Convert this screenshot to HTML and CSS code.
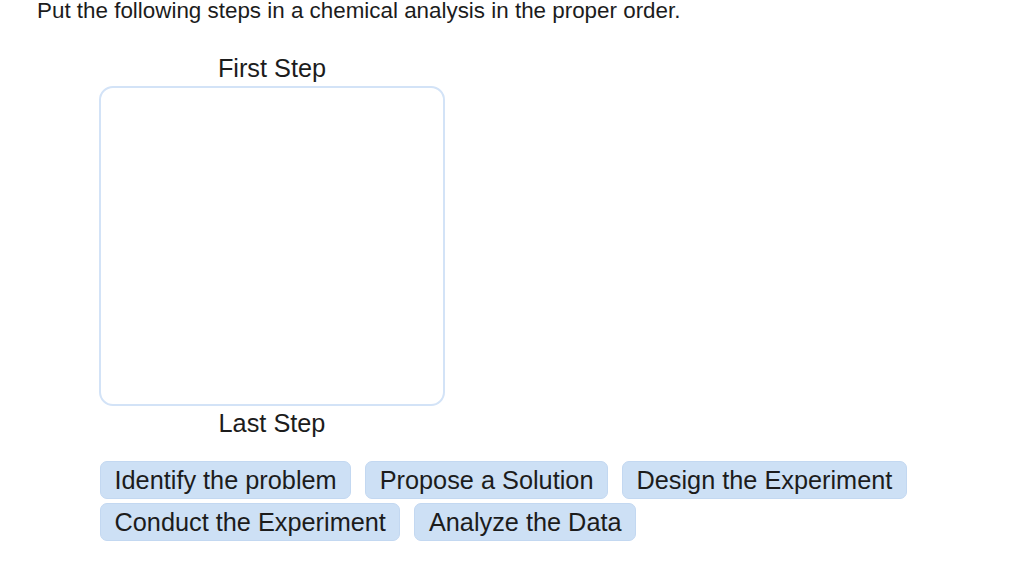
FILE: index.html
```html
<!doctype html>
<html lang="en">
<head>
    <meta charset="utf-8">
    <meta name="viewport" content="width=device-width, initial-scale=1">
    <title>Ordering</title>

    <link rel="stylesheet" href="styles.css">
</head>
<body>
<div class="question">
    <p class="prompt">Put the following steps in a chemical analysis in the proper order.</p>

    <div class="sort">
        <div class="sort-label">First Step</div>
        <div class="drop" id="drop"></div>
        <div class="sort-label">Last Step</div>
    </div>

    <div class="chips" id="chips">
        <span class="chip" draggable="true">Identify the problem</span>
        <span class="chip" draggable="true">Propose a Solution</span>
        <span class="chip" draggable="true">Design the Experiment</span>
        <span class="chip" draggable="true">Conduct the Experiment</span>
        <span class="chip" draggable="true">Analyze the Data</span>
    </div>
</div>
</body>
</html>
```

FILE: styles.css
```css
body {
    margin: 0;
    font-family: "Liberation Sans", Arial, Helvetica, sans-serif;
    color: #1c1c1c;
    background: #fff;
}

.question {
    padding: 0 0 0 37px;
}

.prompt {
    margin: 0;
    font-size: 22.4px;
    line-height: 22px;
}

.sort {
    width: 346px;
    margin: 32px 0 0 62px;
}

.sort-label {
    text-align: center;
    font-size: 25.3px;
    line-height: 29px;
}

.drop {
    box-sizing: border-box;
    height: 320px;
    margin: 3px 0 3px 0;
    border: 2px solid #d3e3f7;
    border-radius: 14px;
}

.chips {
    display: flex;
    flex-wrap: wrap;
    gap: 4px 14px;
    margin: 23px 0 0 63px;
}

.chip {
    box-sizing: border-box;
    height: 38px;
    padding: 0 13.5px;
    font-size: 25.3px;
    line-height: 36px;
    background: #cde0f5;
    border: 1px solid #c3d8f1;
    border-radius: 7px;
    cursor: move;
}
```
